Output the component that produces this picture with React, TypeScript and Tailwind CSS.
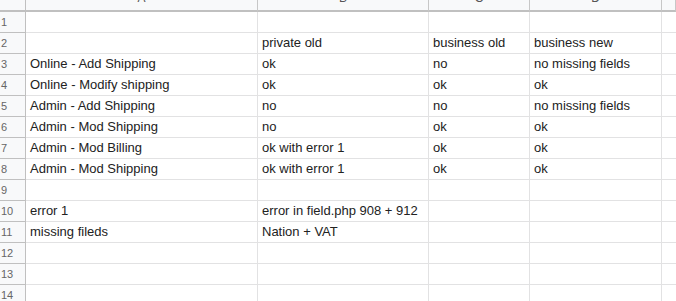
const cols = ["A", "B", "C", "D", ""];

const rows: string[][] = [
  ["", "", "", ""],
  ["", "private old", "business old", "business new"],
  ["Online - Add Shipping", "ok", "no", "no missing fields"],
  ["Online - Modify shipping", "ok", "ok", "ok"],
  ["Admin - Add Shipping", "no", "no", "no missing fields"],
  ["Admin - Mod Shipping", "no", "ok", "ok"],
  ["Admin - Mod Billing", "ok with error 1", "ok", "ok"],
  ["Admin - Mod Shipping", "ok with error 1", "ok", "ok"],
  ["", "", "", ""],
  ["error 1", "error in field.php 908 + 912", "", ""],
  ["missing fileds", "Nation + VAT", "", ""],
  ["", "", "", ""],
  ["", "", "", ""],
  ["", "", "", ""],
];

export default function App() {
  return (
    <div className="w-[676px] h-[301px] overflow-hidden bg-white font-['Liberation_Sans',Arial,sans-serif]">
      <div className="grid grid-cols-[26px_232px_171px_101px_132px_1fr]">
        {/* column header row */}
        <div className="h-[12px] bg-[#f8f9fa] border-r border-b-2 border-[#c0c0c0]" />
        {cols.map((c, i) => (
          <div
            key={i}
            className="h-[12px] overflow-hidden bg-[#f8f9fa] border-r border-b-2 border-r-[#c7c7c7] border-b-[#c0c0c0] flex justify-center"
          >
            <span className="mt-[-8px] text-[12px] leading-[12px] text-[#555]">{c}</span>
          </div>
        ))}

        {rows.map((r, ri) => (
          <div key={ri} className="contents">
            <div className="h-[21px] bg-[#f8f9fa] border-r border-b border-r-[#c0c0c0] border-b-[#c0c0c0] pl-[1px] flex items-center text-[11px] text-[#666]">
              {ri + 1}
            </div>
            {r.map((v, ci) => (
              <div
                key={ci}
                className="h-[21px] border-r border-b border-[#e2e2e3] pl-[4px] flex items-center text-[13px] text-[#222] whitespace-nowrap"
              >
                {v}
              </div>
            ))}
            <div className="h-[21px] border-b border-[#e2e2e3]" />
          </div>
        ))}
      </div>
    </div>
  );
}
